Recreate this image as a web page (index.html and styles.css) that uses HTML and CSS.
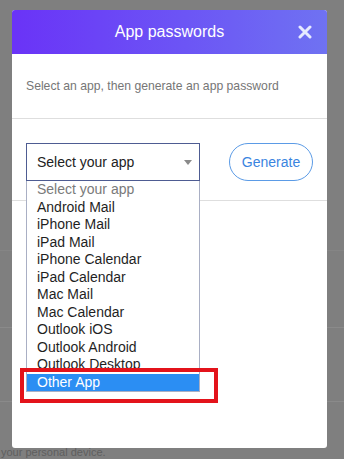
FILE: index.html
```html
<!DOCTYPE html>
<html lang="en">
<head>
<meta charset="utf-8">
<title>App passwords</title>
<link rel="stylesheet" href="styles.css">
</head>
<body>
<div class="page">
  <div class="page-block"></div>
  <div class="page-row r1"></div>
  <div class="page-row r2"></div>
  <div class="page-foot">your personal device.</div>
</div>

<div class="modal">
  <div class="modal-header">
    <span class="spacer"></span>
    <h1 class="title">App passwords</h1>
    <button class="close" aria-label="Close">
      <svg width="14" height="14" viewBox="0 0 14 14"><path d="M2 2 L12 12 M12 2 L2 12" stroke="#e6eaff" stroke-width="3" stroke-linecap="round" fill="none"/></svg>
    </button>
  </div>
  <div class="desc">Select an app, then generate an app password</div>
  <div class="controls">
    <div class="select">
      <span class="select-label">Select your app</span>
      <span class="caret"></span>
      <ul class="options">
        <li class="opt placeholder">Select your app</li>
        <li class="opt">Android Mail</li>
        <li class="opt">iPhone Mail</li>
        <li class="opt">iPad Mail</li>
        <li class="opt">iPhone Calendar</li>
        <li class="opt">iPad Calendar</li>
        <li class="opt">Mac Mail</li>
        <li class="opt">Mac Calendar</li>
        <li class="opt">Outlook iOS</li>
        <li class="opt">Outlook Android</li>
        <li class="opt">Outlook Desktop</li>
        <li class="opt selected">Other App</li>
      </ul>
    </div>
    <button class="generate">Generate</button>
  </div>
</div>

<div class="annotation"></div>
</body>
</html>
```

FILE: styles.css
```css
* { box-sizing: border-box; }
html, body {
  margin: 0;
  padding: 0;
}
body {
  width: 344px;
  height: 459px;
  overflow: hidden;
  background: #7f7f7f;
  font-family: "Liberation Sans", Arial, sans-serif;
  position: relative;
}

/* background page (dimmed) */
.page {
  display: flex;
  flex-direction: column;
}
.page-block {
  height: 251px;
  border-bottom: 1px solid #858585;
}
.page-row.r1 {
  height: 77px;
  border-bottom: 1px solid #8a8a8a;
}
.page-row.r2 {
  height: 74px;
  border-bottom: 1px solid #8a8a8a;
}
.page-foot {
  padding-top: 44px;
  padding-left: 1px;
  font-size: 11px;
  line-height: 13px;
  color: #5e5e5e;
  white-space: nowrap;
}

/* modal */
.modal {
  position: absolute;
  left: 12px;
  top: 10px;
  width: 315px;
  height: 438px;
  background: #fff;
  border-radius: 3px;
}
.modal-header {
  height: 44px;
  background: linear-gradient(90deg, #6a33f7 0%, #6c55f5 55%, #6f72f2 100%);
  border-radius: 3px 3px 0 0;
  display: grid;
  grid-template-columns: 1fr auto 1fr;
  align-items: center;
}
.title {
  margin: 0;
  font-size: 16px;
  font-weight: normal;
  color: #fff;
  line-height: 20px;
}
.close {
  justify-self: end;
  margin-right: 15px;
  padding: 0;
  border: 0;
  background: none;
  width: 14px;
  height: 14px;
  display: flex;
}

.desc {
  height: 65px;
  border-bottom: 1px solid #dedede;
  padding: 0 14px;
  display: flex;
  align-items: center;
  font-size: 12.2px;
  color: #767676;
}

.controls {
  display: flex;
  align-items: center;
  gap: 29px;
  padding: 24px 14px 19px;
  border-bottom: 1px solid #dedede;
}
.select {
  position: relative;
  width: 174px;
  height: 38px;
  border: 1px solid #4e5c92;
  display: flex;
  align-items: center;
  padding-left: 10px;
  font-size: 14px;
  color: #222;
}
.select-label { flex: 1; }
.caret {
  width: 0;
  height: 0;
  border-left: 4.5px solid transparent;
  border-right: 4.5px solid transparent;
  border-top: 5px solid #8a8a8a;
  margin-right: 7px;
}
.options {
  position: absolute;
  left: -1px;
  right: -1px;
  top: calc(100% + 1px);
  margin: 0;
  padding: 0;
  list-style: none;
  background: #fff;
  border: 1px solid #a9afc4;
  border-top: 0;
}
.opt {
  height: 17.5px;
  line-height: 17.5px;
  padding-left: 10px;
  font-size: 14px;
  color: #1f1f1f;
  white-space: nowrap;
}
.opt.placeholder { color: #7a7a7a; }
.opt.selected {
  background: #2b8ef3;
  color: #fff;
}

.generate {
  width: 84px;
  height: 38px;
  border: 1px solid #5b9be6;
  border-radius: 19px;
  background: #fff;
  color: #3a84df;
  font-family: inherit;
  font-size: 14px;
  padding: 0;
}

/* red highlight annotation drawn over the screenshot */
.annotation {
  position: absolute;
  left: 20px;
  top: 368px;
  width: 198px;
  height: 35px;
  border: 4px solid #e3131b;
}
```
